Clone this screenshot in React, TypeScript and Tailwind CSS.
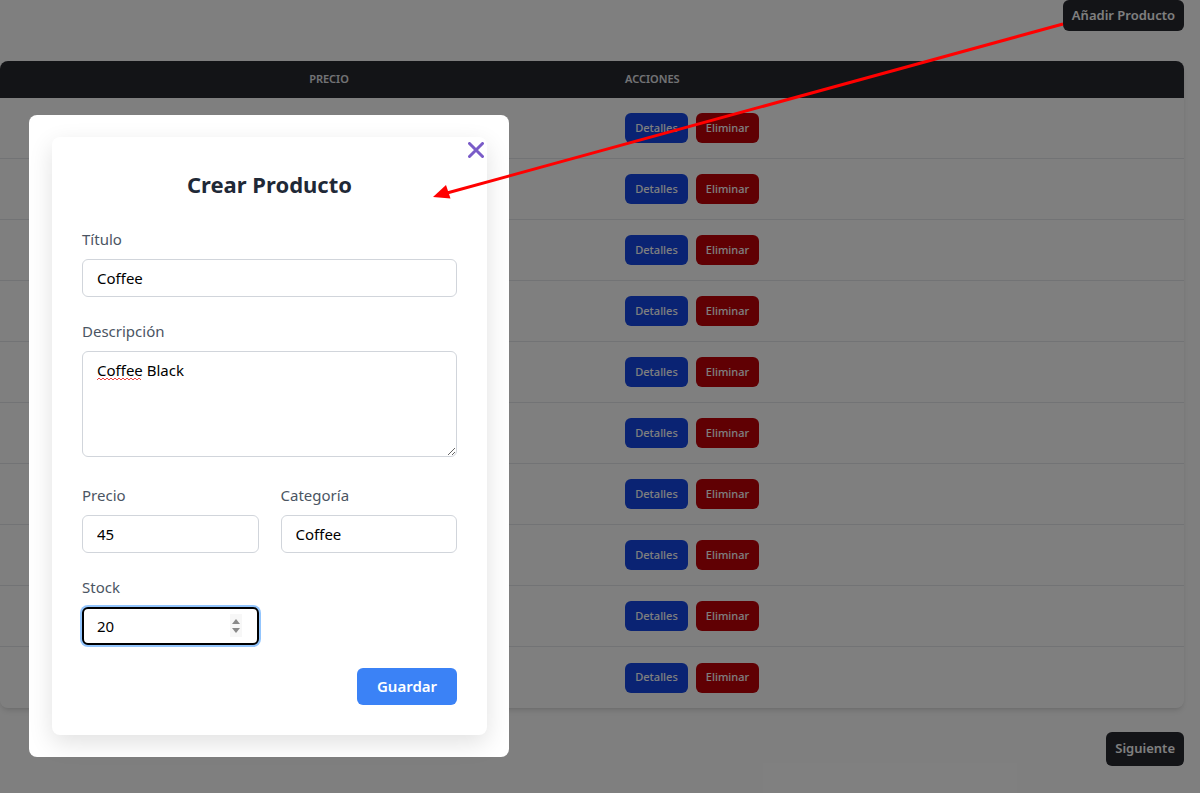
const rows = Array.from({ length: 10 }, (_, i) => i);

function Field({ label, children }: { label: string; children: React.ReactNode }) {
  return (
    <div className="flex flex-col">
      <label className="mb-[9px] text-[15px] leading-[22px] text-[#4b5563]">{label}</label>
      {children}
    </div>
  );
}

const inputCls =
  "h-[38px] w-full rounded-md border border-[#d1d5db] bg-white px-[14px] text-[15px] text-black outline-none";

export default function App() {
  return (
    <div className="relative h-[793px] w-full overflow-hidden bg-white font-['Noto_Sans',sans-serif]">
      {/* page behind the modal */}
      <div className="flex justify-end pr-4">
        <button className="h-[31px] rounded-md bg-[#27282f] px-[9px] text-[13px] font-semibold text-white">
          Añadir Producto
        </button>
      </div>

      <div className="mr-4 mt-[30px] overflow-hidden rounded-lg shadow-md">
        <div className="grid h-[37px] grid-cols-[229px_200px_196px_1fr] items-center bg-[#27282f] text-[11px] font-semibold uppercase text-gray-200">
          <div />
          <div className="text-center">Precio</div>
          <div />
          <div>Acciones</div>
        </div>
        {rows.map((r) => (
          <div
            key={r}
            className="grid h-[61px] grid-cols-[229px_200px_196px_1fr] items-center border-b border-gray-200 last:border-b-0"
          >
            <div />
            <div />
            <div />
            <div className="flex gap-2">
              <button className="h-[30px] w-[63px] rounded-md bg-blue-700 text-[11px] font-medium text-white">
                Detalles
              </button>
              <button className="h-[30px] w-[63px] rounded-md bg-red-700 text-[11px] font-medium text-white">
                Eliminar
              </button>
            </div>
          </div>
        ))}
      </div>

      <div className="mt-6 flex justify-end pr-4">
        <button className="h-[34px] rounded-md bg-[#27282f] px-[9px] text-[13px] font-semibold text-white">
          Siguiente
        </button>
      </div>

      {/* overlay + modal */}
      <div className="absolute inset-0 bg-black/50 pl-[29px] pt-[115px]">
        <div className="w-[480px] rounded-lg bg-white pb-[22px] pl-[23px] pr-[22px] pt-[22px]">
          <div className="relative rounded-lg bg-white px-[30px] pb-[30px] pt-[31px] shadow-[0_8px_24px_rgba(0,0,0,0.12)]">
            <button className="absolute right-[3px] top-[5px] text-[#7a5cc8]">
              <svg width="16" height="16" viewBox="0 0 16 16">
                <path d="M1.5 1.5 L14.5 14.5 M14.5 1.5 L1.5 14.5" stroke="currentColor" strokeWidth="3" strokeLinecap="round" />
              </svg>
            </button>
            <h2 className="text-center text-[22px] font-bold leading-8 text-[#1f2937]">Crear Producto</h2>

            <div className="mt-[28px] flex flex-col gap-[23px]">
              <Field label="Título">
                <input className={inputCls} defaultValue="Coffee" />
              </Field>

              <Field label="Descripción">
                <div className="relative">
                  <textarea
                    className="block h-[106px] w-full resize-y rounded-md border border-[#d1d5db] bg-white px-[14px] py-[7px] text-[15px] leading-[22px] text-black outline-none"
                    defaultValue="Coffee Black"
                    spellCheck={false}
                  />
                  <svg className="absolute left-[15px] top-[26px]" width="44" height="4" viewBox="0 0 44 4">
                    <path
                      d="M0 3 L2 1 L4 3 L6 1 L8 3 L10 1 L12 3 L14 1 L16 3 L18 1 L20 3 L22 1 L24 3 L26 1 L28 3 L30 1 L32 3 L34 1 L36 3 L38 1 L40 3 L42 1 L44 3"
                      fill="none"
                      stroke="#ef4444"
                      strokeWidth="1"
                    />
                  </svg>
                </div>
              </Field>

              <div className="mt-[4px] grid grid-cols-2 gap-[22px]">
                <Field label="Precio">
                  <input className={inputCls} defaultValue="45" />
                </Field>
                <Field label="Categoría">
                  <input className={inputCls} defaultValue="Coffee" />
                </Field>
              </div>

              <div className="grid grid-cols-2 gap-[22px]">
                <Field label="Stock">
                  <div className="relative">
                    <input
                      className="h-[38px] w-full rounded-md border-2 border-black bg-white px-[13px] text-[15px] text-black shadow-[0_0_0_2px_#93c5fd] outline-none"
                      defaultValue="20"
                    />
                    <div className="absolute right-[17px] top-[7px] flex h-[23px] w-[12px] flex-col items-center justify-center gap-[4px] bg-[#f7f7f7]">
                      <svg width="8" height="5" viewBox="0 0 8 5">
                        <path d="M4 0 L8 5 L0 5 Z" fill="#8a8a8a" />
                      </svg>
                      <svg width="8" height="5" viewBox="0 0 8 5">
                        <path d="M0 0 L8 0 L4 5 Z" fill="#8a8a8a" />
                      </svg>
                    </div>
                  </div>
                </Field>
              </div>
            </div>

            <div className="mt-[23px] flex justify-end">
              <button className="h-[37px] w-[100px] rounded-md bg-[#3b82f6] text-[15px] font-semibold text-white">
                Guardar
              </button>
            </div>
          </div>
        </div>
      </div>

      {/* annotation arrow */}
      <svg className="pointer-events-none absolute inset-0" width="1200" height="793">
        <line x1="1063" y1="24" x2="447" y2="193" stroke="#ff0000" strokeWidth="3" />
        <path d="M433 197 L450.5 198.5 L446 185 Z" fill="#ff0000" />
      </svg>
    </div>
  );
}
